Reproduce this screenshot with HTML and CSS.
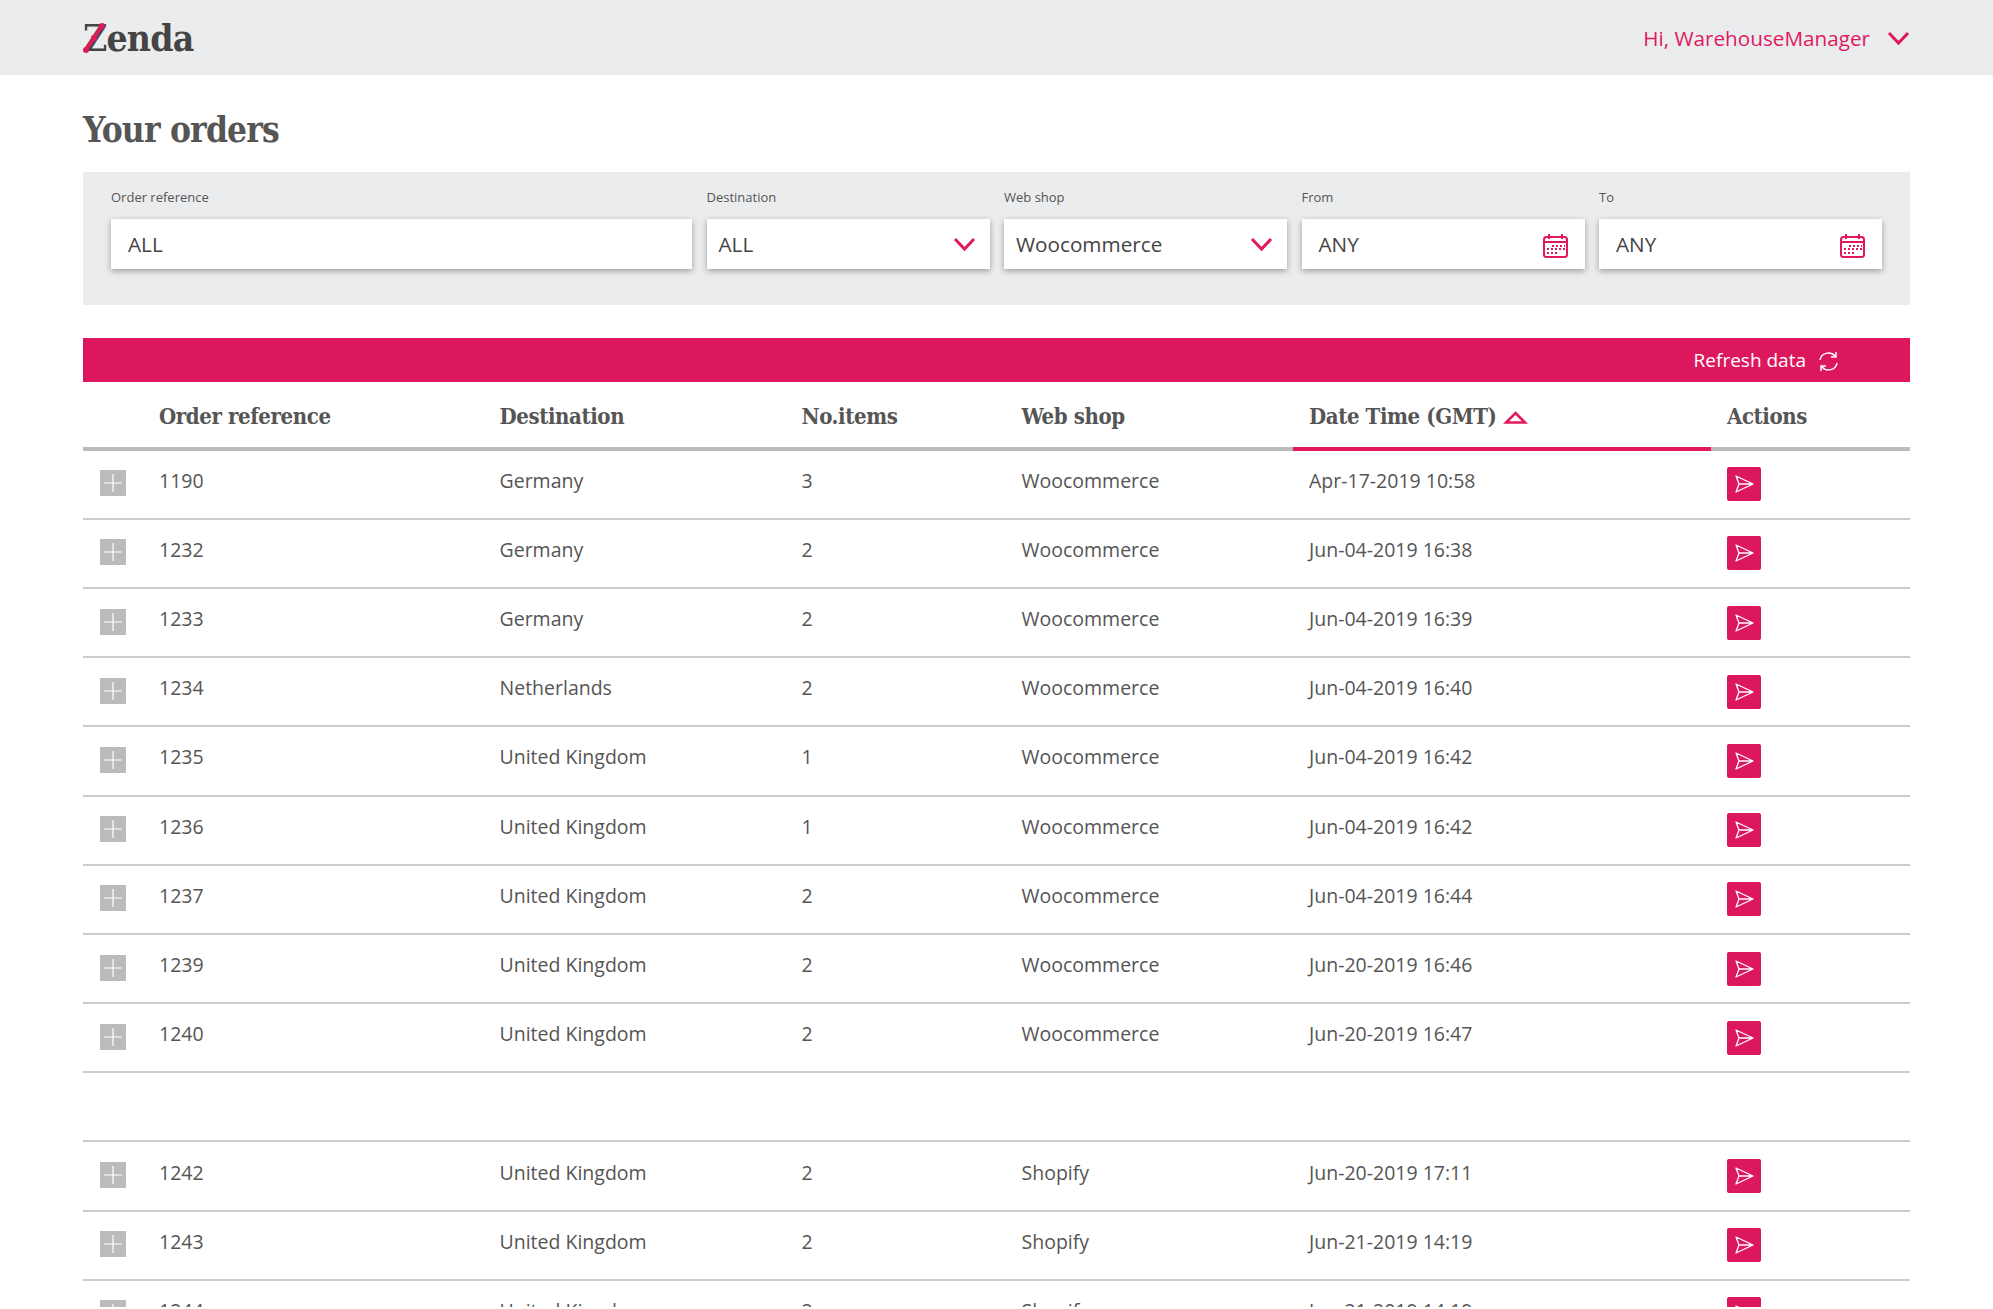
FILE: index.html
```html
<!DOCTYPE html>
<html lang="en">

<head>
    <meta charset="UTF-8">
    <meta name="viewport" content="width=device-width, initial-scale=1.0">
    <title>Your orders</title>
    <link rel="stylesheet" href="styles.css">
</head>

<body>
    <svg class="icon-defs" width="0" height="0">
        <symbol id="i-chevron" viewBox="0 0 23 16">
            <path d="M2 3l9.500 10L21 3" fill="none" stroke="currentColor" stroke-width="3" />
        </symbol>
        <symbol id="i-calendar" viewBox="0 0 25 25">
            <rect x="1" y="4" width="23" height="20" rx="2.500" fill="none" stroke="currentColor" stroke-width="2" />
            <path d="M6 1v5M19 1v5M1 9h23" fill="none" stroke="currentColor" stroke-width="2" />
            <path d="M9 12h2v2H9zM13 12h2v2h-2zM17 12h2v2h-2zM21 12h1v2h-1zM4 15h2v2H4zM8 15h2v2H8zM12 15h2v2h-2zM16 15h2v2h-2zM20 15h2v2h-2zM4 19h2v2H4zM8 19h2v2H8zM12 19h2v2h-2z" fill="currentColor" />
        </symbol>
        <symbol id="i-plus" viewBox="0 0 26 26">
            <path d="M13 4v18M4 13h18" fill="none" stroke="#fff" stroke-width="1.200" />
        </symbol>
        <symbol id="i-send" viewBox="0 0 34 34">
            <path d="M9 9l17 8-17 8 3-8zM12 17h14" fill="none" stroke="#fff" stroke-width="1.300" stroke-linejoin="round" />
        </symbol>
    </svg>

    <div class="page">
        <header class="topbar">
            <div class="logo">
                <span>Zenda</span>
                <svg class="logo-line" width="24" height="32" viewBox="0 0 24 32">
                    <path d="M19 4L3 28" stroke="#e0195f" stroke-width="3.500" />
                    <circle cx="19" cy="4" r="3" fill="#e0195f" />
                    <circle cx="11" cy="16" r="3" fill="#e0195f" />
                    <circle cx="3" cy="28" r="3" fill="#e0195f" />
                </svg>
            </div>
            <div class="user-menu">
                <span>Hi, WarehouseManager</span>
                <svg class="chevron"><use href="#i-chevron" /></svg>
            </div>
        </header>

        <main class="content">
            <h1 class="title">Your orders</h1>

            <section class="filters">
                <div class="filter">
                    <label>Order reference</label>
                    <div class="box box-wide">ALL</div>
                </div>
                <div class="filter">
                    <label>Destination</label>
                    <div class="box box-select">ALL <svg class="chevron"><use href="#i-chevron" /></svg></div>
                </div>
                <div class="filter">
                    <label>Web shop</label>
                    <div class="box box-select">Woocommerce <svg class="chevron"><use href="#i-chevron" /></svg></div>
                </div>
                <div class="filter">
                    <label>From</label>
                    <div class="box box-date">ANY <svg class="calendar"><use href="#i-calendar" /></svg></div>
                </div>
                <div class="filter">
                    <label>To</label>
                    <div class="box box-date">ANY <svg class="calendar"><use href="#i-calendar" /></svg></div>
                </div>
            </section>

            <div class="refresh-bar">
                <span>Refresh data</span>
                <svg class="refresh-icon" width="21" height="21" viewBox="0 0 21 21">
                    <path d="M2 9a8.500 8 0 0 1 15-4M19 12a8.500 8 0 0 1-15 4" fill="none" stroke="#fff" stroke-width="1.500" />
                    <path d="M18 1v5h-5M3 20v-5h5" fill="none" stroke="#fff" stroke-width="1.500" />
                </svg>
            </div>

            <div class="orders">
                <div class="row row-head">
                    <div></div>
                    <div>Order reference</div>
                    <div>Destination</div>
                    <div>No.items</div>
                    <div>Web shop</div>
                    <div class="sorted">Date Time (GMT)
                        <svg class="sort-icon" width="25" height="13" viewBox="0 0 25 13">
                            <path d="M12.500 2L22 11.500H3z" fill="none" stroke="#e0195f" stroke-width="2.500" />
                        </svg>
                    </div>
                    <div>Actions</div>
                </div>

                <div class="row">
                    <div><svg class="plus"><use href="#i-plus" /></svg></div>
                    <div>1190</div><div>Germany</div><div>3</div><div>Woocommerce</div><div>Apr-17-2019 10:58</div>
                    <div><svg class="send"><use href="#i-send" /></svg></div>
                </div>
                <div class="row">
                    <div><svg class="plus"><use href="#i-plus" /></svg></div>
                    <div>1232</div><div>Germany</div><div>2</div><div>Woocommerce</div><div>Jun-04-2019 16:38</div>
                    <div><svg class="send"><use href="#i-send" /></svg></div>
                </div>
                <div class="row">
                    <div><svg class="plus"><use href="#i-plus" /></svg></div>
                    <div>1233</div><div>Germany</div><div>2</div><div>Woocommerce</div><div>Jun-04-2019 16:39</div>
                    <div><svg class="send"><use href="#i-send" /></svg></div>
                </div>
                <div class="row">
                    <div><svg class="plus"><use href="#i-plus" /></svg></div>
                    <div>1234</div><div>Netherlands</div><div>2</div><div>Woocommerce</div><div>Jun-04-2019 16:40</div>
                    <div><svg class="send"><use href="#i-send" /></svg></div>
                </div>
                <div class="row">
                    <div><svg class="plus"><use href="#i-plus" /></svg></div>
                    <div>1235</div><div>United Kingdom</div><div>1</div><div>Woocommerce</div><div>Jun-04-2019 16:42</div>
                    <div><svg class="send"><use href="#i-send" /></svg></div>
                </div>
                <div class="row">
                    <div><svg class="plus"><use href="#i-plus" /></svg></div>
                    <div>1236</div><div>United Kingdom</div><div>1</div><div>Woocommerce</div><div>Jun-04-2019 16:42</div>
                    <div><svg class="send"><use href="#i-send" /></svg></div>
                </div>
                <div class="row">
                    <div><svg class="plus"><use href="#i-plus" /></svg></div>
                    <div>1237</div><div>United Kingdom</div><div>2</div><div>Woocommerce</div><div>Jun-04-2019 16:44</div>
                    <div><svg class="send"><use href="#i-send" /></svg></div>
                </div>
                <div class="row">
                    <div><svg class="plus"><use href="#i-plus" /></svg></div>
                    <div>1239</div><div>United Kingdom</div><div>2</div><div>Woocommerce</div><div>Jun-20-2019 16:46</div>
                    <div><svg class="send"><use href="#i-send" /></svg></div>
                </div>
                <div class="row">
                    <div><svg class="plus"><use href="#i-plus" /></svg></div>
                    <div>1240</div><div>United Kingdom</div><div>2</div><div>Woocommerce</div><div>Jun-20-2019 16:47</div>
                    <div><svg class="send"><use href="#i-send" /></svg></div>
                </div>
                <div class="row"></div>
                <div class="row">
                    <div><svg class="plus"><use href="#i-plus" /></svg></div>
                    <div>1242</div><div>United Kingdom</div><div>2</div><div>Shopify</div><div>Jun-20-2019 17:11</div>
                    <div><svg class="send"><use href="#i-send" /></svg></div>
                </div>
                <div class="row">
                    <div><svg class="plus"><use href="#i-plus" /></svg></div>
                    <div>1243</div><div>United Kingdom</div><div>2</div><div>Shopify</div><div>Jun-21-2019 14:19</div>
                    <div><svg class="send"><use href="#i-send" /></svg></div>
                </div>
                <div class="row">
                    <div><svg class="plus"><use href="#i-plus" /></svg></div>
                    <div>1244</div><div>United Kingdom</div><div>2</div><div>Shopify</div><div>Jun-21-2019 14:19</div>
                    <div><svg class="send"><use href="#i-send" /></svg></div>
                </div>
            </div>
        </main>
    </div>
</body>

</html>
```

FILE: styles.css
```css
html,
body {
    margin: 0;
    padding: 0;
    background-color: white;
    overflow: hidden;
}

body {
    font-family: "Open Sans", sans-serif;
    font-size: 19.5px;
    color: #555;
}

.icon-defs {
    position: absolute;
}

.page {
    height: 1307px;
    overflow: hidden;
}

.topbar {
    display: flex;
    justify-content: space-between;
    align-items: center;
    height: 75px;
    padding: 0 83px;
    background-color: #ebecee;
}

.logo {
    position: relative;
    font-family: "DejaVu Serif Condensed", "DejaVu Serif", serif;
    font-weight: bold;
    font-size: 37px;
    letter-spacing: -0.8px;
    line-height: 78px;
    color: #444;
}

.logo-line {
    position: absolute;
    left: 0;
    top: 23px;
}

.user-menu {
    display: flex;
    align-items: center;
    gap: 17px;
    color: #e0195f;
    font-size: 20.7px;
}

.chevron {
    width: 23px;
    height: 16px;
    color: #e0195f;
}

.content {
    padding: 0 83px;
}

.title {
    margin: 0;
    height: 97px;
    font-family: "DejaVu Serif Condensed", "DejaVu Serif", serif;
    font-size: 35px;
    letter-spacing: -0.8px;
    line-height: 110px;
    color: #555;
}

.filters {
    display: grid;
    grid-template-columns: 1fr repeat(4, 283px);
    gap: 14.5px;
    height: 133px;
    box-sizing: border-box;
    padding: 16px 28px 0;
    background-color: #ebecee;
}

.filter label {
    display: block;
    font-size: 13px;
    line-height: 19px;
    margin-bottom: 12px;
}

.box {
    display: flex;
    justify-content: space-between;
    align-items: center;
    height: 50px;
    box-sizing: border-box;
    background-color: white;
    box-shadow: 0 2px 6px rgba(0, 0, 0, 0.35);
    color: #444;
    font-size: 20.7px;
    padding: 0 17px;
}

.box-select {
    padding: 0 14px 0 12px;
}

.calendar {
    width: 25px;
    height: 25px;
    color: #e0195f;
    margin-top: 2px;
}

.refresh-bar {
    display: flex;
    justify-content: flex-end;
    align-items: center;
    gap: 12px;
    height: 44px;
    margin-top: 33px;
    padding-right: 71px;
    background-color: #dd175d;
    color: white;
    font-size: 19px;
}

.refresh-icon {
    margin-top: 2px;
}

.row {
    display: grid;
    grid-template-columns: 60px 340.5px 302px 220px 287.5px 418px 199px;
    align-items: center;
    height: 69.2px;
    box-sizing: border-box;
    border-bottom: 2px solid #ccc;
}

.row > div {
    padding: 0 16px 8px;
}

.row > div:first-child {
    padding: 0 0 2px 17px;
}

.row > div:last-child {
    padding: 0 16px;
}

.row-head {
    height: 68.6px;
    border-bottom: 4px solid #bbb;
    font-family: "DejaVu Serif Condensed", "DejaVu Serif", serif;
    font-weight: bold;
    font-size: 22px;
    letter-spacing: -0.4px;
    align-items: stretch;
}

.row-head > div,
.row-head > div:last-child {
    display: flex;
    align-items: center;
    gap: 6px;
    padding: 3px 16px 0;
    margin-bottom: -4px;
    border-bottom: 4px solid transparent;
}

.row-head > .sorted {
    border-bottom-color: #e0195f;
}

.sort-icon {
    margin-top: 4px;
}

.plus {
    display: block;
    width: 26px;
    height: 26px;
    background-color: #bbb;
}

.send {
    display: block;
    width: 34px;
    height: 34px;
    border-radius: 2px;
    background-color: #dd175d;
}
```
